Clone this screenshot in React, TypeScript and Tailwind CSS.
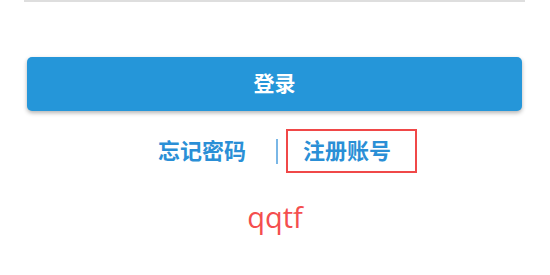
export default function App() {
  return (
    <div className="w-[550px] h-[275px] bg-white font-['Noto_Sans','Noto_Sans_CJK_SC',sans-serif]">
      <div className="ml-[24px] w-[501px] h-[2px] bg-[#dedede]" />

      <button
        type="button"
        className="mt-[55px] ml-[27px] flex h-[54px] w-[495px] items-center justify-center rounded-[5px] bg-[#2596d9] text-[21px] font-bold text-white shadow-[0_2px_4px_rgba(0,0,0,0.3)]"
      >
        登录
      </button>

      <div className="mt-[18px] flex items-center justify-center pl-[25px]">
        <span className="pb-[3px] text-[22px] font-bold leading-none text-[#2a8fd6]">忘记密码</span>
        <span className="ml-[30px] h-[25px] w-[2px] bg-[#7ab7e6]" />
        <span className="ml-[8px] flex h-[44px] items-center border-2 border-[#f04848] pb-[3px] pl-[15px] pr-[24px] text-[22px] font-bold leading-none text-[#2a8fd6]">
          注册账号
        </span>
      </div>

      <p className="mt-[26px] text-center font-['Open_Sans',sans-serif] text-[29px] leading-[36px] text-[#f44e4e]">qqtf</p>
    </div>
  );
}
